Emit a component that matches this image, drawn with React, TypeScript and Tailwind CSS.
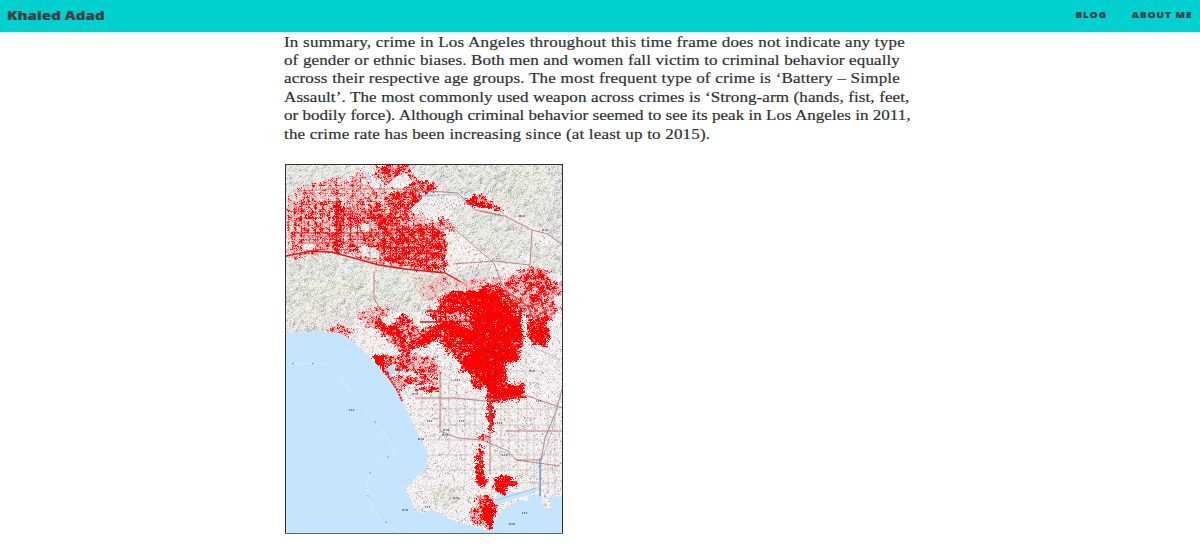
import React from "react";

type Point = [number, number];
type Region = { d: number; p: Point[]; grid?: number };

const parse = (s: string): Point[] =>
  s.split(" ").map((q) => q.split(",").map(Number) as Point);

const hash = (x: number, y: number, s: number) => {
  let h = Math.imul(x, 374761393) + Math.imul(y, 668265263) + Math.imul(s, 974634777);
  h = Math.imul(h ^ (h >>> 13), 1274126177);
  return ((h ^ (h >>> 16)) >>> 0) / 4294967296;
};

const smooth = (x: number, y: number, s: number) => {
  const i = Math.floor(x);
  const j = Math.floor(y);
  const u = x - i;
  const v = y - j;
  return (
    (hash(i, j, s) * (1 - u) + hash(i + 1, j, s) * u) * (1 - v) +
    (hash(i, j + 1, s) * (1 - u) + hash(i + 1, j + 1, s) * u) * v
  );
};

const inside = (x: number, y: number, p: Point[]) => {
  let c = false;
  for (let i = 0, j = p.length - 1; i < p.length; j = i++) {
    if (p[i][1] > y !== p[j][1] > y &&
      x < ((p[j][0] - p[i][0]) * (y - p[i][1])) / (p[j][1] - p[i][1]) + p[i][0]) c = !c;
  }
  return c;
};

const ocean = parse("285,333 300,332 320,331 328,333 340,333 350,339 359,347 370,357 380,368 387,377 396,391 404,404 410,417 419,436 427,450 428,457 426,471 418,475 413,481 405,490 412,501 415,510 423,513 430,510 438,512 447,518 460,523 473,526 484,530 491,530 496,520 501,511 508,507 520,500 528,501 530,497 541,493 543,508 552,510 550,500 544,497 563,496 563,534 285,534");
const harbor = parse("493,502 498,494 506,492 522,492 539,486 539,490 523,497 512,499 503,503 495,510");

const mountains = [
  parse("285,164 352,164 350,176 320,184 285,214"),
  parse("405,164 563,164 563,246 548,232 520,219 503,209 488,194 465,196 440,192 425,176"),
  parse("444,224 455,208 478,206 508,218 530,230 532,246 522,263 497,263 474,244 458,231"),
  parse("285,261 330,255 380,265 445,275 490,263 492,276 474,289 440,292 430,312 398,312 374,307 352,325 320,331 285,333"),
  parse("530,246 563,245 563,276 531,267"),
];
const greens = [
  parse("448,215 490,215 519,244 510,252 475,242"),
  parse("287,265 375,268 440,280 425,302 360,300 285,325"),
  parse("430,488 462,486 458,504 436,506"),
  parse("477,169 547,172 557,210 500,198"),
];

const crime: Region[] = [
  { d: 0.3, grid: 8, p: parse("286,205 297,190 332,178 352,180 358,169 377,174 391,198 413,211 446,225 446,272 411,270 375,263 335,252 286,259") },
  { d: 0.42, grid: 7, p: parse("293,201 310,197 330,202 332,210 360,202 395,215 446,232 446,270 380,262 378,248 358,254 340,248 318,249 306,256 293,256") },
  { d: 0.54, grid: 6, p: parse("383,229 390,212 400,222 416,232 430,221 446,236 446,272 381,262") },
  { d: 0.62, grid: 4, p: parse("335,201 341,201 341,254 334,254") },
  { d: 0.6, p: parse("375,165 408,164 412,176 421,180 434,184 438,191 421,193 426,200 416,214 411,220 401,210 394,215 384,199 391,192 397,193 385,183 375,171") },
  { d: 0.8, p: parse("376,202 382,203 383,218 389,223 384,230 377,223") },
  { d: 0.6, p: parse("463,199 472,197 480,193 486,196 491,203 500,208 505,212 493,210 479,204 466,204") },
  { d: 0.88, p: parse("466,200 480,201 494,206 502,211 483,206 468,203") },
  { d: 0.5, p: parse("440,216 446,221 458,230 449,230 438,222") },
  { d: 0.22, p: parse("418,279 440,275 458,281 498,275 511,275 501,296 440,304 420,299") },
  { d: 0.65, grid: 5, p: parse("440,298 454,291 476,292 487,283 497,286 509,298 520,306 524,333 523,345 519,362 507,364 507,386 514,382 525,385 525,398 506,402 487,400 485,382 480,391 473,388 471,373 460,371 460,360 446,352 439,343 420,341 421,331 436,322 426,312 436,309") },
  { d: 0.94, p: parse("472,292 493,291 504,307 520,320 522,335 506,347 517,352 516,362 502,361 501,386 513,387 523,389 521,397 492,400 488,386 480,379 473,369 465,370 462,358 475,352 473,342 448,334 433,330 448,322 477,324 472,306 447,302 454,295") },
  { d: 0.2, p: parse("443,313 455,311 468,317 474,330 451,328 443,321") },
  { d: 0.47, p: parse("497,284 511,277 526,268 550,271 550,278 562,285 561,293 553,303 561,308 551,320 528,319 513,302 504,297") },
  { d: 0.64, p: parse("514,279 526,272 550,274 547,281 556,285 547,291 541,303 528,303 539,289 525,286") },
  { d: 0.8, p: parse("527,322 539,317 548,318 548,345 532,344 527,334") },
  { d: 0.54, p: parse("377,312 389,325 404,314 414,321 420,334 430,340 430,346 413,350 405,358 395,347 387,338 378,331") },
  { d: 0.8, p: parse("378,316 386,325 395,326 404,334 407,348 400,338 385,334 377,328") },
  { d: 0.76, p: parse("407,343 428,333 440,332 440,337 425,345 412,348") },
  { d: 0.36, p: parse("357,314 377,307 393,312 378,332 364,328") },
  { d: 0.54, p: parse("371,357 383,353 393,356 409,354 418,356 411,365 429,371 434,382 421,381 416,370 397,372 388,378 382,369") },
  { d: 0.38, p: parse("400,355 425,354 440,362 439,376 420,374") },
  { d: 1.15, p: parse("370,356 384,353 386,365 384,373") },
  { d: 0.5, p: parse("385,376 411,376 440,379 440,385 411,384 400,392 393,385") },
  { d: 0.66, p: parse("413,389 438,386 439,391 417,392") },
  { d: 0.46, p: parse("325,330 342,325 354,330 348,338 333,334") },
  { d: 0.76, grid: 5, p: parse("487,400 494,400 494,433 487,432") },
  { d: 0.5, p: parse("478,435 490,435 490,441 477,441") },
  { d: 0.72, grid: 4, p: parse("477,446 483,446 484,486 476,485") },
  { d: 0.8, p: parse("476,476 490,477 487,482 481,487 476,484") },
  { d: 0.9, p: parse("493,477 506,475 516,480 516,486 508,487 506,493 499,492 493,487") },
  { d: 0.5, grid: 6, p: parse("475,495 489,496 496,506 494,521 490,531 482,527 467,520 469,512 478,505") },
  { d: 1.02, p: parse("484,507 492,505 495,511 493,522 489,530 486,523 481,519 482,513") },
];

const clearings = [
  parse("361,169 367,169 380,186 378,194 370,184"),
  parse("388,185 397,176 406,173 413,182 399,191"),
  parse("410,209 429,193 430,201 416,216"),
  parse("358,248 365,245 379,251 379,259 366,257"),
  parse("301,246 308,242 317,245 312,250 303,250"),
  parse("380,315 386,317 391,323 388,326 383,322"),
  parse("388,366 395,364 396,376 389,378"),
  parse("362,223 369,224 369,231 361,230"),
];
const lakes = [
  parse("386,366 394,365 395,372 389,378 388,369"),
  parse("347,267 354,267 353,270 348,269"),
  parse("386,284 390,284 389,291 387,290"),
  parse("362,169 369,174 373,183 370,182"),
  parse("424,194 434,194 434,197 421,197"),
  parse("286,213 291,212 291,218 286,219"),
  parse("501,293 506,293 505,300 502,300"),
];

const X0 = 286, Y0 = 165, X1 = 562, Y1 = 533;

function pixel(x: number, y: number): string {
  const px = x + 0.5;
  const py = y + 0.5;
  const n = hash(x, y, 1);
  const wet = inside(px, py, ocean);
  const cleared = clearings.some((c) => inside(px, py, c));
  if (!cleared && (!wet || x > 465)) {
    const jx = px + (smooth(x / 3, y / 3, 5) - 0.5) * 5 + (hash(x, y, 51) - 0.5) * 3;
    const jy = py + (smooth(x / 3, y / 3, 6) - 0.5) * 5 + (hash(x, y, 52) - 0.5) * 3;
    let d = 0;
    let sparse = false;
    for (const r of crime) {
      if (!inside(jx, jy, r.p)) continue;
      if (r.d === 0.2) { sparse = true; continue; }
      const street = r.grid && (x % r.grid === 0 || y % r.grid === 1) ? 0.2 : 0;
      d = Math.max(d, r.d + street);
    }
    if (sparse) d -= 0.2;
    if (d > 0) {
      const v = d + (n - 0.5) * 0.5 + (smooth(x / 2.5, y / 2.5, 8) - 0.5) * 0.6;
      if (v > 0.64) return hash(x, y, 22) < 0.035 ? "#b20f12" : hash(x, y, 23) < 0.12 ? "#e91618" : "#ff0000";
      if (v > 0.52) return "#f65557";
      if (v > 0.38) return "#f5a0a0";
      if (v > 0.23) return "#f5cac9";
    }
  }
  if (wet || inside(px, py, harbor)) return "#c5e5ff";
  if (lakes.some((l) => inside(px, py, l))) return "#b9dcf1";
  const hilly = mountains.some((m) => inside(px, py, m));
  const green = greens.some((m) => inside(px, py, m));
  if (hilly || green) {
    const ridge = smooth((x + y) / 2.6, (y - x) / 5, 12);
    const t = ridge * 0.5 + n * 0.5;
    if (y > 278 && hash(x, y, 31) < 0.04) return "#edb7b2";
    if (t < 0.2) return green ? "#b2b4aa" : "#aeada9";
    if (t < 0.34) return green ? "#c9ccc2" : "#c9c8c4";
    if (t < 0.46) return green ? "#d9ddd2" : "#dad8d4";
    if (t < 0.64) return green ? "#e5e8df" : "#e7e5e1";
    return "#f3f1ee";
  }
  const urban = n * 0.68 + smooth(x / 2, y / 2, 40) * 0.32;
  if (urban < 0.11) return "#aaa1a0";
  if (urban < 0.2) return "#c9bfbd";
  if (urban < 0.3) return "#e3d3d1";
  if (urban < 0.48) return "#ece8e6";
  return "#f6f4f4";
}

function paint() {
  const layers = new Map<string, string[]>();
  for (let y = Y0; y < Y1; y++) {
    let start = X0;
    let tone = pixel(X0, y);
    for (let x = X0 + 1; x <= X1; x++) {
      const next = x < X1 ? pixel(x, y) : "";
      if (next !== tone) {
        if (!layers.has(tone)) layers.set(tone, []);
        layers.get(tone)!.push(`M${start} ${y}h${x - start}v1H${start}z`);
        start = x;
        tone = next;
      }
    }
  }
  return [...layers].map(([fill, d]) => ({ fill, d: d.join("") }));
}

const layers = paint();

const labels: Point[] = [[522, 216], [452, 231], [545, 230], [436, 357], [532, 371], [458, 380], [445, 435], [462, 421], [446, 430], [505, 455], [456, 498], [525, 513], [512, 524], [352, 410], [405, 510], [428, 507], [415, 394], [430, 421], [398, 370], [539, 401], [421, 439], [500, 423]];

function CrimeMap() {
  return (
    <svg className="block h-[370px] w-[278px]" viewBox="285 164 278 370" role="img" aria-label="Crime map of Los Angeles">
      <rect x="285" y="164" width="278" height="370" fill="#f6f4f4" />
      <g shapeRendering="crispEdges">
        {layers.map((l) => <path key={l.fill} fill={l.fill} d={l.d} />)}
      </g>
      <g fill="none" stroke="#a29b9b" strokeWidth=".6" opacity=".55">
        <path d="M441 370V430M449 375V455M457 365V434M465 391V480M475 393V440M501 400V470M509 400V476M518 407V480M527 402V476M534 410V490M548 402V493M555 400V493M417 409H560M418 425H557M425 440H560M430 455H559M433 470H560M500 483H559M422 399H480M422 379V411M451 414H481M526 350V371H508M538 370V389" />
      </g>
      <g fill="none" stroke="#b66c6c" strokeWidth=".8">
        <path d="M297 191L340 189L401 189L458 193L475 210L505 216L532 230L548 234L562 244M440 216L465 238L494 263L502 285L517 302L526 312M453 264L494 261L530 265L532 230M440 373V431L458 438L482 440L508 451L516 460L560 466M415 398H455L485 401L525 395L562 408M490 400V475M516 460H541L545 438L556 412L562 389M506 431H562M374 271V299L384 314M482 211L502 216M491 490L500 483" />
      </g>
      <g fill="none" stroke="#91b3d0" strokeWidth=".7">
        <path d="M478 203L491 179L507 174M548 234L562 246M420 196L456 194L469 205M531 347L549 354L560 360M540 497L541 462L552 431L558 401M500 451L513 455M497 500L536 488" />
      </g>
      <path d="M540 458V496" stroke="#6277ba" strokeWidth="1" />
      <g fill="none" stroke="#e11717">
        <path strokeWidth="1.3" d="M286 256L312 251L331 252L350 257L379 265L405 269L445 273L461 282" />
        <path d="M380 214V264M391 207V267M337 193V254M402 228V268M383 229H446M383 239H446M383 248H446M295 233H380M298 243H446M342 214H390" strokeWidth=".9" opacity=".75" />
        <path strokeWidth="1.5" d="M505 291L517 298L528 307L540 303M528 307L533 318L548 310" stroke="#cd4548" />
        <path strokeWidth="2" d="M385 371L392 382L398 391L402 401" strokeDasharray="2 1" />
        <path strokeWidth="1.6" d="M420 322H438M427 311H440" />
      </g>
      <g fill="none" stroke="#76272d" strokeWidth=".7" opacity=".65">
        <path d="M474 335H508M446 344H483M488 315V400M495 341V394M458 337V359M479 351H510M384 229V264M400 224V269M383 235H446M300 236H384M370 194V261M338 202V253" />
      </g>
      <g stroke="#333" strokeWidth="1.2">
        {labels.map(([x, y], i) => (
          <path key={i} d={`M${x - 3} ${y}h6`} strokeDasharray={i % 2 ? "1.2 .8" : "2 .7 1 .6"} />
        ))}
      </g>
      <path d="M287 363.500H323L331 367L342 378L348 389L358 402L365 409L377 424L388 439L394 450L388 457L378 464L370 473L367 487L368 497L373 509L382 522L394 529L402 533" fill="none" stroke="#eef4f3" strokeWidth=".9" strokeDasharray="2 1.5" />
      <path d="M374 421l2 2M387 457h2M370 472v2M368 495v2M385 522l2 1M312 363.500h2M292 363.500h2" stroke="#85969c" />
      <path d="M285.500 164V534M562.500 164V534" stroke="#303030" />
      <path d="M285 164.500H563" stroke="#303030" />
      <path d="M285 533.500H563" stroke="#606870" />
    </svg>
  );
}

const lines: { text: string; fit: string }[] = [
  { text: "In summary, crime in Los Angeles throughout this time frame does not indicate any type", fit: "w-[564.5px] tracking-[0.17px]" },
  { text: "of gender or ethnic biases. Both men and women fall victim to criminal behavior equally", fit: "w-[560px] tracking-[0.09px]" },
  { text: "across their respective age groups. The most frequent type of crime is ‘Battery – Simple", fit: "w-[560px] tracking-[0.16px]" },
  { text: "Assault’. The most commonly used weapon across crimes is ‘Strong-arm (hands, fist, feet,", fit: "w-[568.5px] tracking-[0.07px]" },
  { text: "or bodily force). Although criminal behavior seemed to see its peak in Los Angeles in 2011,", fit: "w-[569.5px]" },
  { text: "the crime rate has been increasing since (at least up to 2015).", fit: "w-[387.5px] tracking-[0.15px]" },
];

export default function App() {
  return (
    <div className="h-[550px] overflow-hidden bg-white">
      <header className="flex h-[33px] items-center justify-between border-b border-[#e6efef] bg-[#00d0d0] bg-clip-padding pr-[9px] pl-[7px] font-['Open_Sans',sans-serif] font-extrabold text-[#404040] [-webkit-text-stroke:0.2px_#404040]">
        <a className="origin-left scale-x-[1.21] text-[12.5px] leading-none whitespace-nowrap">Khaled Adad</a>
        <nav className="flex origin-right scale-x-[1.1] gap-[22.5px] pb-[3px] text-[9px] leading-none tracking-[0.9px] whitespace-nowrap">
          <a>BLOG</a>
          <a className="-mr-[0.9px]">ABOUT ME</a>
        </nav>
      </header>
      <main className="ml-[284px]">
        <p className="-mt-[0.5px] origin-left scale-x-[1.1] font-['Liberation_Serif',serif] text-[15.5px] leading-[18.4px] text-[#303030] [-webkit-text-stroke:0.2px_#303030]">
          {lines.map((l) => (
            <span key={l.text} className={`block whitespace-nowrap [text-align-last:justify] ${l.fit}`}>{l.text}</span>
          ))}
        </p>
        <div className="mt-[21.1px] ml-px">
          <CrimeMap />
        </div>
      </main>
    </div>
  );
}
